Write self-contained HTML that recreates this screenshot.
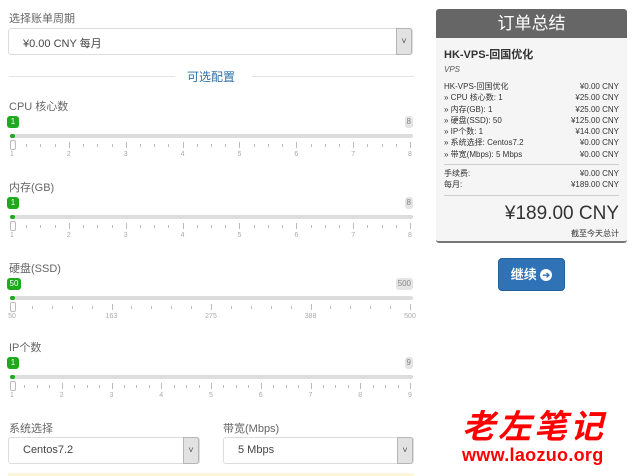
<!DOCTYPE html>
<html><head><meta charset="utf-8"><style>
*{box-sizing:border-box;margin:0;padding:0}
body{width:634px;height:476px;overflow:hidden;background:#fff;font-family:"Liberation Sans","Noto Sans CJK SC",sans-serif;color:#555;position:relative}
.abs{position:absolute}
.lbl{position:absolute;font-size:11px;color:#666}
.sel{position:absolute;height:27px;border:1px solid #ddd;border-radius:3px;background:#fff;font-size:11px;color:#444;padding:6px 0 0 14px}
.sel .ar{position:absolute;right:0;top:-1px;width:16px;height:27px;background:#e2e2e2;border:1px solid #b5b5b5;border-radius:0 3px 3px 0;font-size:9px;text-align:center;line-height:24px;color:#555}
.track{position:absolute;left:10px;width:403px;height:4px;background:#ddd;border-radius:2px}
.fill{position:absolute;left:10px;width:5px;height:4px;background:#1daa1d;border-radius:2px}
.bub{position:absolute;width:12px;height:12px;border-radius:3px;font-size:8px;text-align:center;line-height:12px;color:#fff;background:#1daa1d}
.bubr{position:absolute;height:12px;border-radius:3px;font-size:8px;text-align:center;line-height:12px;color:#888;background:#e4e4e4;padding:0 2px}
.tk{position:absolute;width:1px;background:#bbb}
.num{position:absolute;font-size:7px;color:#aaa;transform:translateX(-50%)}
.handle{position:absolute;width:6px;height:10px;border:1px solid #bbb;border-radius:2px;background:#fff}
.row{display:flex;justify-content:space-between;font-size:8px;color:#333;line-height:11.3px}
</style></head><body>
<div class="lbl" style="left:9px;top:10px">选择账单周期</div>
<div class="sel" style="left:8px;top:28px;width:405px">¥0.00 CNY 每月<div class="ar">˅</div></div>
<div class="abs" style="left:9px;top:76px;width:166px;height:1px;background:#e3e3e3"></div>
<div class="abs" style="left:252px;top:76px;width:162px;height:1px;background:#e3e3e3"></div>
<div class="abs" style="left:187px;top:68px;font-size:12px;color:#2c6fa8">可选配置</div>
<div id="sl"></div>

<div class="lbl" style="left:9px;top:420px">系统选择</div>
<div class="lbl" style="left:223px;top:420px">带宽(Mbps)</div>
<div class="sel" style="left:8px;top:437px;width:192px">Centos7.2<div class="ar">˅</div></div>
<div class="sel" style="left:223px;top:437px;width:191px">5 Mbps<div class="ar">˅</div></div>
<div class="abs" style="left:8px;top:473px;width:406px;height:3px;background:#fdf6dc"></div>

<div class="abs" style="left:436px;top:9px;width:191px;height:234px;background:#f5f5f5;border-radius:3px;border-bottom:2px solid #777"></div>
<div class="abs" style="left:436px;top:9px;width:191px;height:29px;background:#666;border-radius:3px 3px 0 0;color:#fff;font-size:17px;text-align:center;line-height:29px">订单总结</div>
<div class="abs" style="left:444px;top:46px;width:175px">
<div style="font-size:11px;font-weight:bold;color:#333">HK-VPS-回国优化</div>
<div style="font-size:8px;font-style:italic;color:#555;margin-top:3px">VPS</div>
<div style="margin-top:7px">
<div class="row"><span>HK-VPS-回国优化</span><span>¥0.00 CNY</span></div>
<div class="row"><span>» CPU 核心数: 1</span><span>¥25.00 CNY</span></div>
<div class="row"><span>» 内存(GB): 1</span><span>¥25.00 CNY</span></div>
<div class="row"><span>» 硬盘(SSD): 50</span><span>¥125.00 CNY</span></div>
<div class="row"><span>» IP个数: 1</span><span>¥14.00 CNY</span></div>
<div class="row"><span>» 系统选择: Centos7.2</span><span>¥0.00 CNY</span></div>
<div class="row"><span>» 带宽(Mbps): 5 Mbps</span><span>¥0.00 CNY</span></div>
</div>
<div style="border-top:1px solid #ccc;margin-top:4px;padding-top:3px">
<div class="row"><span>手续费:</span><span>¥0.00 CNY</span></div>
<div class="row"><span>每月:</span><span>¥189.00 CNY</span></div>
</div>
<div style="border-top:1px solid #ccc;margin-top:4px;text-align:right">
<div style="font-size:19px;color:#333;margin-top:7px">¥189.00 CNY</div>
<div style="font-size:8px;color:#333;margin-top:3px">截至今天总计</div>
</div>
</div>
<div class="abs" style="left:498px;top:258px;width:67px;height:33px;background:#2f72b5;border:1px solid #25609a;border-radius:4px;color:#fff;font-size:13px;font-weight:bold;text-align:center;line-height:31px">继续 <span style="display:inline-block;width:12px;height:12px;border-radius:50%;background:#fff;color:#2f72b5;font-size:9px;line-height:12px;vertical-align:1px">➔</span></div>

<div class="abs" style="left:462px;top:404px;font-size:33px;font-weight:bold;font-style:italic;color:#f00;letter-spacing:3px;font-family:'Noto Sans CJK SC',sans-serif;line-height:40px">老左笔记</div>
<div class="abs" style="left:462px;top:445px;font-size:18px;font-weight:bold;color:#f00;letter-spacing:0.3px">www.laozuo.org</div>

<script>
var S=[{l:"CPU 核心数",y:98,max:"8",n:["1","2","3","4","5","6","7","8"]},
{l:"内存(GB)",y:179,max:"8",n:["1","2","3","4","5","6","7","8"]},
{l:"硬盘(SSD)",y:260,max:"500",v:"50",n:["50","163","275","388","500"]},
{l:"IP个数",y:339,max:"9",n:["1","2","3","4","5","6","7","8","9"]}];
var h="";
S.forEach(function(s){
var y=s.y;
h+='<div class="lbl" style="left:9px;top:'+y+'px">'+s.l+'</div>';
h+='<div class="bub" style="left:7px;top:'+(y+18)+'px;'+(s.v?'width:14px':'')+'">'+(s.v||"1")+'</div>';
h+='<div class="bubr" style="right:221px;top:'+(y+18)+'px">'+s.max+'</div>';
h+='<div class="track" style="top:'+(y+36)+'px"></div><div class="fill" style="top:'+(y+36)+'px"></div>';
var k=s.n.length-1,x0=12,x1=410;
var minors=s.n.length==5?5:4;
for(var i=0;i<k;i++){for(var j=0;j<minors;j++){var x=x0+(x1-x0)*(i+j/minors)/k;h+='<div class="tk" style="left:'+x+'px;top:'+(y+(j?46:44))+'px;height:'+(j?3:6)+'px"></div>';}}
h+='<div class="tk" style="left:'+x1+'px;top:'+(y+44)+'px;height:6px"></div>';
h+='<div class="handle" style="left:10px;top:'+(y+42)+'px"></div>';
s.n.forEach(function(t,i){h+='<div class="num" style="left:'+(x0+(x1-x0)*i/k)+'px;top:'+(y+53)+'px">'+t+'</div>';});
});
document.getElementById("sl").innerHTML=h;
</script>
</body></html>
